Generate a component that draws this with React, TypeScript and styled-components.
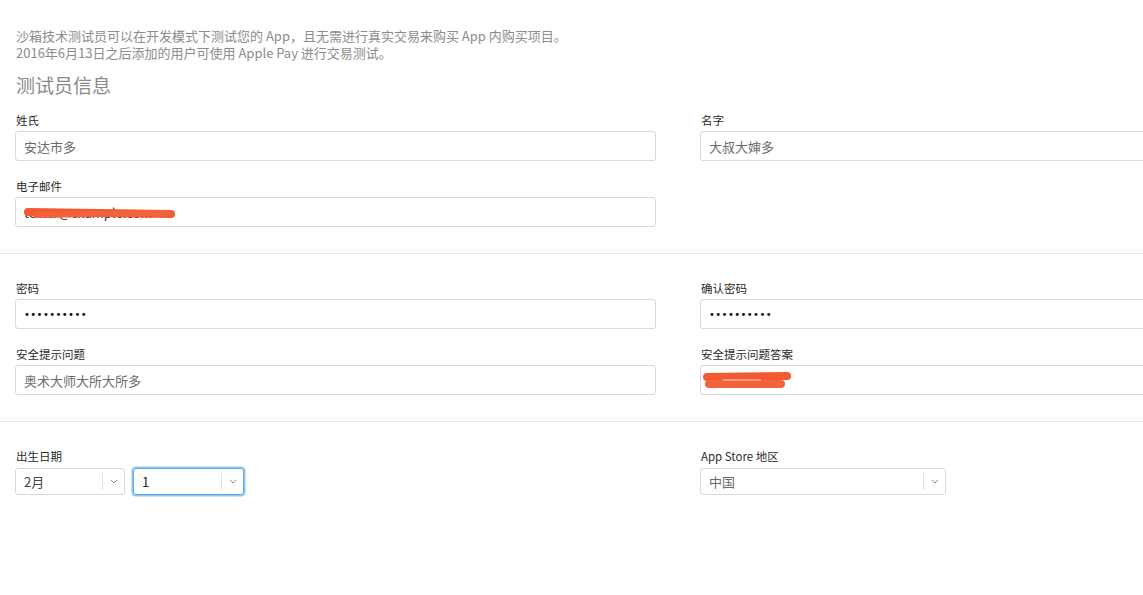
import React from "react";
import styled, { createGlobalStyle } from "styled-components";

const Global = createGlobalStyle`
  html, body { margin: 0; padding: 0; background: #fff; overflow: hidden; }
  body { font-family: "Noto Sans CJK SC", "Noto Sans", "Liberation Sans", sans-serif; }
`;

const Page = styled.div`
  width: 100%;
  overflow: hidden;
  padding-top: 27px;
`;

const Intro = styled.p`
  margin: 0;
  padding: 0 16px;
  font-size: 13px;
  line-height: 17px;
  color: #8c8c8c;
`;

const Heading = styled.h2`
  margin: 11px 0 0;
  padding: 0 16px;
  font-size: 19px;
  line-height: 26px;
  font-weight: 400;
  color: #8a8a8a;
`;

const Section = styled.section<{ $top: number }>`
  display: grid;
  grid-template-columns: 641px 641px;
  column-gap: 44px;
  row-gap: 17px;
  padding: ${(p) => p.$top}px 15px 26px;
`;

const Divider = styled.hr`
  margin: 0;
  border: 0;
  border-top: 1px solid #e6e6e6;
`;

const Field = styled.div`
  display: flex;
  flex-direction: column;
  gap: 3px;
`;

const Label = styled.label`
  font-size: 11.5px;
  line-height: 16px;
  color: #2a2a2a;
  font-weight: 400;
  padding-left: 1px;
`;

const InputBox = styled.div`
  position: relative;
  height: 30px;
  box-sizing: border-box;
  border: 1px solid #d9d9d9;
  border-radius: 3px;
  padding: 0 8px;
  display: flex;
  align-items: center;
  font-size: 13px;
  color: #6b6b6b;
  overflow: hidden;
`;

const Dots = styled.span`
  color: #111;
  font-family: "DejaVu Sans", sans-serif;
  font-size: 10px;
  letter-spacing: 0.4px;
`;

const Hidden = styled.span`
  color: #333;
`;

const Scribble = styled.svg`
  position: absolute;
  left: 0;
  top: 0;
  pointer-events: none;
`;

const SelectRow = styled.div`
  display: flex;
  gap: 8px;
  margin-top: 1px;
`;

const Select = styled.div<{ $w: number; $focus?: boolean }>`
  width: ${(p) => p.$w}px;
  height: 27px;
  box-sizing: border-box;
  border: 1px solid ${(p) => (p.$focus ? "#5aa8e8" : "#d9d9d9")};
  box-shadow: ${(p) => (p.$focus ? "0 0 0 1.5px #8cc6f2" : "none")};
  border-radius: 3px;
  display: flex;
  align-items: center;
  font-size: 13px;
  color: ${(p) => (p.$focus ? "#222" : "#444")};
`;

const SelectValue = styled.span<{ $muted?: boolean }>`
  flex: 1;
  padding-left: 8px;
  color: ${(p) => (p.$muted ? "#6b6b6b" : "inherit")};
`;

const Arrow = styled.span`
  width: 21px;
  height: 17px;
  border-left: 1px solid #e2e2e2;
  display: flex;
  align-items: center;
  justify-content: center;
`;

const Chevron = () => (
  <svg width="8" height="5" viewBox="0 0 8 5">
    <path d="M1 1l3 3 3-3" fill="none" stroke="#8a8a8a" strokeWidth="1" />
  </svg>
);

export default function App() {
  return (
    <>
      <Global />
      <Page>
        <Intro>
          沙箱技术测试员可以在开发模式下测试您的 App，且无需进行真实交易来购买 App 内购买项目。
          <br />
          2016年6月13日之后添加的用户可使用 Apple Pay 进行交易测试。
        </Intro>
        <Heading>测试员信息</Heading>
        <Section $top={14}>
          <Field>
            <Label>姓氏</Label>
            <InputBox>安达市多</InputBox>
          </Field>
          <Field>
            <Label>名字</Label>
            <InputBox>大叔大婶多</InputBox>
          </Field>
          <Field>
            <Label>电子邮件</Label>
            <InputBox>
              <Hidden>tester@example.com</Hidden>
              <Scribble width="200" height="30">
                <path d="M12 14 L155 16" stroke="#f25a32" strokeWidth="8" strokeLinecap="round" fill="none" />
                <path d="M20 17 L150 15" stroke="#f4623b" strokeWidth="6" strokeLinecap="round" fill="none" />
              </Scribble>
            </InputBox>
          </Field>
        </Section>
        <Divider />
        <Section $top={26}>
          <Field>
            <Label>密码</Label>
            <InputBox>
              <Dots>••••••••••</Dots>
            </InputBox>
          </Field>
          <Field>
            <Label>确认密码</Label>
            <InputBox>
              <Dots>••••••••••</Dots>
            </InputBox>
          </Field>
          <Field>
            <Label>安全提示问题</Label>
            <InputBox>奥术大师大所大所多</InputBox>
          </Field>
          <Field>
            <Label>安全提示问题答案</Label>
            <InputBox>
              <Scribble width="120" height="30">
                <path d="M6 11 L86 10" stroke="#f25a32" strokeWidth="8" strokeLinecap="round" fill="none" />
                <path d="M8 18 L80 18" stroke="#f4623b" strokeWidth="8" strokeLinecap="round" fill="none" />
                <path d="M22 14 L60 14" stroke="#fbd3c7" strokeWidth="1" fill="none" />
              </Scribble>
            </InputBox>
          </Field>
        </Section>
        <Divider />
        <Section $top={26}>
          <Field>
            <Label>出生日期</Label>
            <SelectRow>
              <Select $w={110}>
                <SelectValue>2月</SelectValue>
                <Arrow>
                  <Chevron />
                </Arrow>
              </Select>
              <Select $w={111} $focus>
                <SelectValue>1</SelectValue>
                <Arrow>
                  <Chevron />
                </Arrow>
              </Select>
            </SelectRow>
          </Field>
          <Field>
            <Label>App Store 地区</Label>
            <SelectRow>
              <Select $w={246}>
                <SelectValue $muted>中国</SelectValue>
                <Arrow>
                  <Chevron />
                </Arrow>
              </Select>
            </SelectRow>
          </Field>
        </Section>
      </Page>
    </>
  );
}
